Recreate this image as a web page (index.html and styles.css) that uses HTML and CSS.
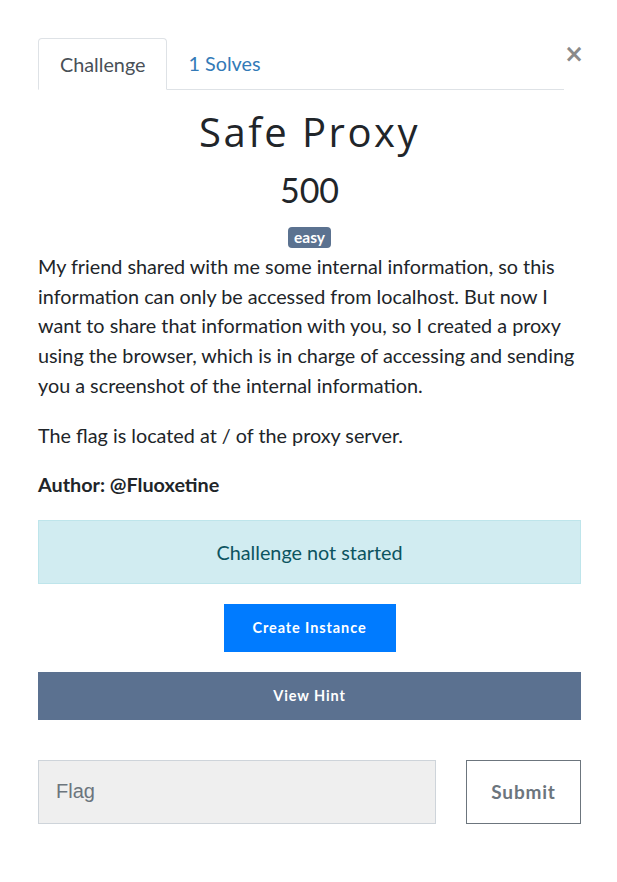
FILE: index.html
```html
<!DOCTYPE html>
<html>
<head>
<meta charset="utf-8">
<link rel="stylesheet" href="styles.css">
</head>
<body>
<div class="modal">
  <div class="head">
    <ul class="tabs">
      <li class="tab active">Challenge</li>
      <li class="tab link">1 Solves</li>
    </ul>
    <span class="close">&times;</span>
  </div>
  <h2 class="title">Safe Proxy</h2>
  <h3 class="value">500</h3>
  <div class="tags"><span class="badge">easy</span></div>
  <div class="desc">
    <p>My friend shared with me some internal information, so this information can only be accessed from localhost. But now I want to share that information with you, so I created a proxy using the browser, which is in charge of accessing and sending you a screenshot of the internal information.</p>
    <p>The flag is located at / of the proxy server.</p>
    <p class="author">Author: @Fluoxetine</p>
  </div>
  <div class="alert">Challenge not started</div>
  <div class="center"><button class="btn-create">Create Instance</button></div>
  <button class="btn-hint">View Hint</button>
  <div class="submit-row">
    <div class="flag">Flag</div>
    <button class="btn-submit">Submit</button>
  </div>
</div>
</body>
</html>
```
FILE: styles.css
```css
* { box-sizing: border-box; }
html, body { margin: 0; padding: 0; background: #fff; }
body { font-family: Lato, "Liberation Sans", sans-serif; color: #212529; }
.modal { width: 617px; padding: 38px 36px 0 38px; }
.head { display: flex; align-items: flex-start; }
.tabs { list-style: none; margin: 0; padding: 0; display: flex; width: 526px; flex-shrink: 0; border-bottom: 1px solid #dee2e6; }
.tab { font-size: 19.8px; height: 51px; line-height: 51px; padding: 0 21px; }
.tab.active { color: #495057; border: 1px solid #dee2e6; border-bottom: 1px solid #fff; border-radius: 4px 4px 0 0; margin-bottom: -1px; height: 52px; }
.tab.link { color: #337ab7; }
.close { margin-left: auto; margin-right: 1px; margin-top: 4px; font-family: "DejaVu Sans", sans-serif; font-size: 24px; line-height: 24px; color: #8a8a8a; font-weight: bold; }
.title { font-family: "Open Sans", sans-serif; font-weight: 400; font-size: 40px; letter-spacing: 2.5px; text-align: center; margin: 15px 0 0; line-height: 54px; }
.value { font-family: Lato, sans-serif; font-weight: 400; font-size: 34px; text-align: center; margin: 11px 0 0; line-height: 40px; }
.tags { text-align: center; margin-top: 17px; line-height: 0; }
.badge { display: inline-block; background: #5b7290; color: #fff; font-weight: 700; font-size: 15.5px; line-height: 21px; height: 21px; padding: 0 6px; border-radius: 4px; }
.desc { font-size: 19.8px; line-height: 29.7px; margin-top: 4px; }
.desc p { margin: 0 0 20px; }
.author { font-weight: 700; }
.alert { margin-top: 5px; background: #d1ecf1; border: 1px solid #bee5eb; color: #0c5460; height: 64px; display: flex; align-items: center; justify-content: center; font-size: 19.8px; }
.center { text-align: center; margin-top: 20px; line-height: 0; }
button { font-family: Lato, sans-serif; cursor: pointer; }
.btn-create { background: #007bff; color: #fff; border: none; width: 172px; height: 48px; font-size: 14.5px; font-weight: 700; letter-spacing: 0.9px; }
.btn-hint { display: block; width: 543px; margin-top: 20px; background: #5b7190; color: #fff; border: none; height: 48px; font-size: 14.5px; font-weight: 700; letter-spacing: 0.9px; }
.submit-row { display: flex; margin-top: 40px; gap: 30px; }
.flag { width: 398px; height: 64px; background: #efefef; border: 1px solid #ced4da; font-family: "Liberation Sans", Arial, sans-serif; font-size: 20px; color: #6c757d; display: flex; align-items: center; padding-left: 17px; }
.btn-submit { width: 115px; height: 64px; background: #fff; border: 1px solid #6c757d; color: #6c757d; font-size: 19px; font-weight: 700; letter-spacing: 0.8px; }
```
